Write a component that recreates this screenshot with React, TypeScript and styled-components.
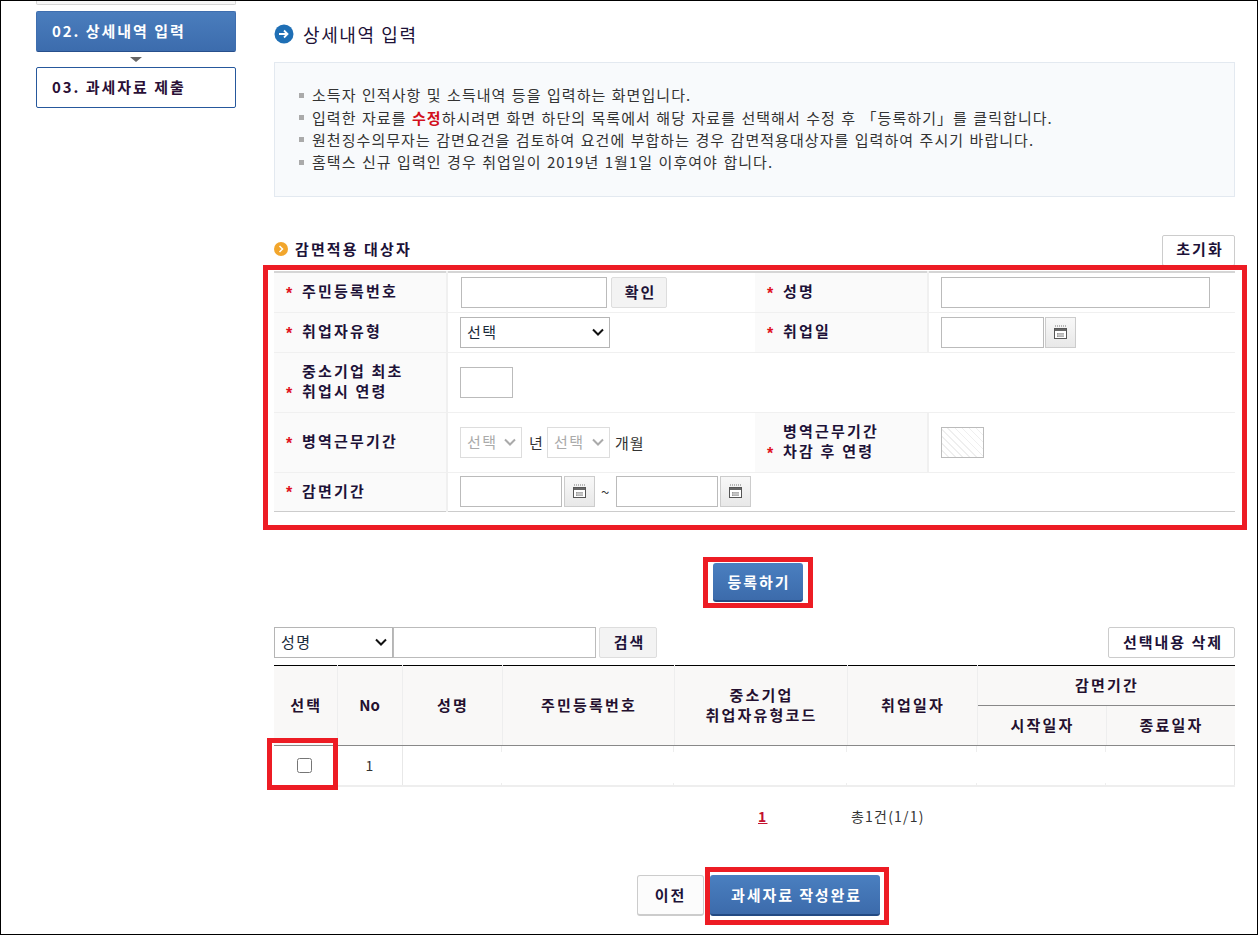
import React from 'react';
import styled, { createGlobalStyle } from 'styled-components';

const GlobalStyle = createGlobalStyle`
    * { box-sizing: border-box; }
    html, body { margin: 0; padding: 0; background: #fff; }
    body { font-family: "Noto Sans CJK KR", "Liberation Sans", sans-serif; font-size: 15px; color: #333; }
`;

const chevron = (color: string) =>
    `url("data:image/svg+xml,%3Csvg xmlns='http://www.w3.org/2000/svg' width='12' height='8'%3E%3Cpath d='M1 1.5 6 6.5 11 1.5' fill='none' stroke='${color}' stroke-width='2'/%3E%3C/svg%3E")`;

const Frame = styled.div`
    width: 1258px;
    height: 935px;
    display: flex;
    overflow: hidden;
    border: 1px solid #000;
`;

const Sidebar = styled.nav`
    width: 200px;
    margin-left: 35px;
    flex: none;
    display: flex;
    flex-direction: column;
    align-items: center;
`;

const PrevStep = styled.div`
    width: 100%;
    height: 4px;
    background: #f7f7f7;
    border: 1px solid #d5d5d5;
    border-top: 0;
    border-radius: 0 0 2px 2px;
    margin-bottom: 6px;
`;

const Step = styled.div<{ $active?: boolean }>`
    width: 100%;
    height: 41px;
    padding: 0 0 3px 15px;
    display: flex;
    align-items: center;
    font-size: 15px;
    font-weight: 700;
    letter-spacing: 1.95px;
    border-radius: 2px;
    color: ${p => (p.$active ? '#fff' : '#2a0f36')};
    background: ${p => (p.$active ? 'linear-gradient(#4a7dbd, #3c6cad)' : '#fff')};
    border: 1px solid ${p => (p.$active ? '#3e6eaf' : '#26589c')};
    border-bottom-color: ${p => (p.$active ? '#274f8c' : '#26589c')};
`;

const StepArrow = styled.div`
    width: 0;
    height: 0;
    margin: 5px 0 5px;
    border-left: 6px solid transparent;
    border-right: 6px solid transparent;
    border-top: 5px solid #666;
`;

const Main = styled.main`
    width: 961px;
    margin-left: 38px;
    flex: none;
`;

const PageTitle = styled.h2`
    margin: 19px 0 0;
    height: 28px;
    display: flex;
    align-items: center;
    gap: 9px;
    font-size: 18px;
    font-weight: 400;
    letter-spacing: 1.6px;
    color: #1d1238;
`;

const InfoBox = styled.ul`
    list-style: none;
    margin: 14px 0 0;
    height: 135px;
    padding: 21px 0 0 24px;
    background: #f8fafc;
    border: 1px solid #e3e9f0;
`;

const InfoItem = styled.li`
    height: 22.4px;
    line-height: 22px;
    font-size: 15px;
    letter-spacing: 1.05px;
    word-spacing: 1px;
    color: #333;
    display: flex;
    align-items: center;
    white-space: pre;
    &::before {
        content: '';
        width: 5px;
        height: 5px;
        margin-right: 8px;
        background: #aaa;
    }
`;

const RedText = styled.b`
    color: #d2101c;
`;

const SectionHead = styled.div`
    margin-top: 38px;
    height: 30px;
    display: flex;
    align-items: center;
    justify-content: space-between;
`;

const SectionTitle = styled.h3`
    margin: 0 0 3px;
    display: flex;
    align-items: center;
    gap: 7px;
    font-size: 15px;
    font-weight: 700;
    letter-spacing: 2.1px;
    color: #1d1238;
`;

const Button = styled.button<{ $w: number }>`
    width: ${p => p.$w}px;
    height: 31px;
    padding: 0 0 1px 3px;
    flex: none;
    font-family: inherit;
    font-size: 15px;
    font-weight: 700;
    letter-spacing: 2px;
    color: #1d1238;
    background: #f3f3f3;
    border: 1px solid #ddd;
    border-radius: 2px;
`;

const ConfirmButton = styled(Button)`
    margin-left: 4px;
`;

const WhiteButton = styled(Button)`
    background: #fff;
    border-color: #ccc;
`;

const ResetButton = styled(WhiteButton)`
    padding-bottom: 3px;
`;

const BlueButton = styled.button<{ $w: number; $h: number }>`
    width: ${p => p.$w}px;
    height: ${p => p.$h}px;
    padding: 0 0 0 3px;
    font-family: inherit;
    font-size: 15px;
    font-weight: 700;
    letter-spacing: 1.9px;
    color: #fff;
    background: linear-gradient(#4a7fc0, #3c6bab);
    border: 0;
    border-bottom: 2px solid #234a83;
    border-radius: 3px;
`;

const FormWrap = styled.div`
    position: relative;
    margin-top: 6px;
`;

const MarkedInline = styled.div`
    position: relative;
    display: inline-flex;
`;

const Mark = styled.div<{ $t: number; $r: number; $b: number; $l: number }>`
    position: absolute;
    top: ${p => p.$t}px;
    right: ${p => p.$r}px;
    bottom: ${p => p.$b}px;
    left: ${p => p.$l}px;
    border: 5px solid #ed1c24;
    pointer-events: none;
`;

const FormTable = styled.table`
    width: 100%;
    table-layout: fixed;
    border-collapse: collapse;
    border-top: 2px solid #d5d5d5;
`;

const FormRow = styled.tr<{ $h: number }>`
    height: ${p => p.$h}px;
    border-bottom: 1px solid #f0f0f0;
    &:last-child {
        border-bottom: 1px solid #ccc;
    }
`;

const Th = styled.th`
    padding: 0 0 2px 12px;
    background: #fafafa;
    border-right: 2px solid #f0f0f0;
    text-align: left;
    font-size: 15px;
    font-weight: 700;
    letter-spacing: 2.2px;
    line-height: 20px;
    color: #1d1238;
`;

const LabelRow = styled.span`
    display: flex;
    align-items: center;
    height: 20px;
`;

const Req = styled.span<{ $on?: boolean }>`
    width: 16px;
    flex: none;
    padding-top: 5px;
    color: #e01020;
    font: 700 16px/14px "Liberation Sans", sans-serif;
    visibility: ${p => (p.$on === false ? 'hidden' : 'visible')};
`;

const Td = styled.td`
    padding: 0 0 0 12px;
`;

const Controls = styled.div`
    display: flex;
    align-items: center;
    font-size: 15px;
    color: #333;
`;

const Input = styled.input<{ $w: number; $ml?: number }>`
    width: ${p => p.$w}px;
    height: 31px;
    margin-left: ${p => p.$ml ?? 0}px;
    padding: 0 6px;
    flex: none;
    background: #fff;
    border: 1px solid #bbb;
    outline: 0;
`;

const HatchBox = styled.div`
    width: 43px;
    height: 31px;
    border: 1px solid #bbb;
    background: repeating-linear-gradient(45deg, #fff, #fff 4px, #efefef 4px, #efefef 5px);
`;

const Select = styled.select<{ $w: number }>`
    width: ${p => p.$w}px;
    height: 31px;
    flex: none;
    padding: 0 0 2px 6px;
    appearance: none;
    font-family: inherit;
    font-size: 15px;
    letter-spacing: 1.4px;
    color: #1a2a3a;
    background: #fff ${chevron('%23111')} no-repeat right 5px center;
    border: 1px solid #b5b5b5;
    border-radius: 0;
    outline: 0;
    &:disabled {
        color: #aaa;
        border-color: #ddd;
        opacity: 1;
        background-image: ${chevron('%23aaa')};
    }
`;

const CalButton = styled.button<{ $ml: number }>`
    width: 31px;
    height: 31px;
    margin-left: ${p => p.$ml}px;
    padding: 0;
    flex: none;
    display: flex;
    align-items: center;
    justify-content: center;
    background: linear-gradient(#f8f8f8, #e8e8e8);
    border: 1px solid #ccc;
`;

const UnitText = styled.span<{ $w: number; $ml: number }>`
    width: ${p => p.$w}px;
    margin-left: ${p => p.$ml}px;
    flex: none;
    letter-spacing: 1px;
`;

const SubmitRow = styled.div`
    margin-top: 51px;
    display: flex;
    justify-content: center;
    padding-left: 6px;
`;

const SearchRow = styled.div`
    margin-top: 25px;
    height: 31px;
    display: flex;
    align-items: center;
`;

const SearchGap = styled.div`
    width: 3px;
`;

const Spacer = styled.div`
    flex: 1;
`;

const ListWrap = styled.div`
    position: relative;
    margin-top: 7px;
`;

const ListTable = styled.table`
    width: 100%;
    table-layout: fixed;
    border-collapse: collapse;
    border-top: 1px solid #000;
    border-bottom: 2px solid #eee;
`;

const ListTh = styled.th<{ $tight?: boolean }>`
    height: 40px;
    padding: 0 0 0 ${p => (p.$tight ? 0 : 2)}px;
    background: #f9f8f7;
    border-right: 1px solid #eee;
    border-bottom: 1px solid #888;
    font-size: 15px;
    font-weight: 700;
    letter-spacing: ${p => (p.$tight ? 0 : 2.2)}px;
    line-height: 20px;
    color: #24102f;
    &:last-child { border-right: 0; }
`;

const ListTd = styled.td<{ $solid?: boolean }>`
    height: 41px;
    padding: 0;
    text-align: center;
    font-size: 14px;
    color: #333;
    border-right: 1px solid ${p => (p.$solid ? '#e8e8e8' : 'transparent')};
    background: ${p => (p.$solid
        ? 'none'
        : 'linear-gradient(#eee, #eee) right top / 1px 6px no-repeat, linear-gradient(#eee, #eee) right bottom / 1px 2px no-repeat')};
    &:last-child { border-right: 1px solid #e8e8e8; background: none; }
`;

const CheckCell = styled(ListTd)`
    padding: 0 1px 3px 0;
`;

const Check = styled.input`
    width: 15px;
    height: 15px;
    margin: 0;
    vertical-align: middle;
`;

const Pager = styled.div`
    margin-top: 17px;
    height: 24px;
    display: flex;
    align-items: center;
    padding-left: 484px;
    font-size: 14px;
    letter-spacing: 1.2px;
`;

const PageLink = styled.a`
    width: 93px;
    color: #c4122f;
    font-weight: 700;
    text-decoration: underline;
`;

const BottomRow = styled.div`
    margin-top: 47px;
    display: flex;
    gap: 6px;
    padding-left: 363px;
`;

const PrevButton = styled(WhiteButton)`
    height: 41px;
    padding-left: 0;
    background: #fcfcfc;
    border: 1px solid #ccc;
    border-bottom-width: 2px;
    border-radius: 3px;
`;

const CalendarIcon = () => (
    <svg width="15" height="15" viewBox="0 0 15 15">
        <path d="M2 1h1M4 1h1M6 1h1M8 1h1M10 1h1M12 1h1" stroke="#777" strokeWidth="1" />
        <rect x="1.5" y="3.5" width="12" height="10" fill="#fff" stroke="#555" />
        <rect x="2" y="4" width="11" height="2" fill="#666" />
        <path d="M4 8h7v4H4z" fill="#999" />
        <path d="M6 8v4M8 8v4M10 8v4M4 10h7" stroke="#eee" strokeWidth="0.6" />
    </svg>
);

const BlueDot = () => (
    <svg width="20" height="20" viewBox="0 0 20 20">
        <circle cx="10" cy="10" r="9.5" fill="#1f6fb5" />
        <path d="M5 10h8M10 6.5 13.5 10 10 13.5" fill="none" stroke="#fff" strokeWidth="1.8" />
    </svg>
);

const OrangeDot = () => (
    <svg width="14" height="14" viewBox="0 0 14 14">
        <circle cx="7" cy="7" r="7" fill="#f2a62c" />
        <path d="M5.5 4 8.5 7 5.5 10" fill="none" stroke="#fff" strokeWidth="1.5" />
    </svg>
);

const Label = ({ lines }: { lines: string[] }) => (
    <>
        {lines.map((line, i) => (
            <LabelRow key={line}>
                <Req $on={i === lines.length - 1}>*</Req>
                {line}
            </LabelRow>
        ))}
    </>
);

const App = () => {
    return (
        <Frame>
            <GlobalStyle />
            <Sidebar>
                <PrevStep />
                <Step $active>02. 상세내역 입력</Step>
                <StepArrow />
                <Step>03. 과세자료 제출</Step>
            </Sidebar>
            <Main>
                <PageTitle><BlueDot />상세내역 입력</PageTitle>
                <InfoBox>
                    <InfoItem>소득자 인적사항 및 소득내역 등을 입력하는 화면입니다.</InfoItem>
                    <InfoItem>입력한 자료를 <RedText>수정</RedText>하시려면 화면 하단의 목록에서 해당 자료를 선택해서 수정 후 「등록하기」를 클릭합니다.</InfoItem>
                    <InfoItem>원천징수의무자는 감면요건을 검토하여 요건에 부합하는 경우 감면적용대상자를 입력하여 주시기 바랍니다.</InfoItem>
                    <InfoItem>홈택스 신규 입력인 경우 취업일이 2019년 1월1일 이후여야 합니다.</InfoItem>
                </InfoBox>
                <SectionHead>
                    <SectionTitle><OrangeDot />감면적용 대상자</SectionTitle>
                    <ResetButton $w={73}>초기화</ResetButton>
                </SectionHead>
                <FormWrap>
                    <Mark $t={-6} $r={-12} $b={-18} $l={-11} />
                    <FormTable>
                        <colgroup>
                            <col width="173" />
                            <col width="308" />
                            <col width="173" />
                            <col />
                        </colgroup>
                        <tbody>
                            <FormRow $h={40}>
                                <Th><Label lines={['주민등록번호']} /></Th>
                                <Td>
                                    <Controls>
                                        <Input $w={146} $ml={1} />
                                        <ConfirmButton $w={56}>확인</ConfirmButton>
                                    </Controls>
                                </Td>
                                <Th><Label lines={['성명']} /></Th>
                                <Td><Input $w={269} /></Td>
                            </FormRow>
                            <FormRow $h={40}>
                                <Th><Label lines={['취업자유형']} /></Th>
                                <Td><Controls><Select $w={150}><option>선택</option></Select></Controls></Td>
                                <Th><Label lines={['취업일']} /></Th>
                                <Td>
                                    <Controls>
                                        <Input $w={103} />
                                        <CalButton $ml={1}><CalendarIcon /></CalButton>
                                    </Controls>
                                </Td>
                            </FormRow>
                            <FormRow $h={60}>
                                <Th><Label lines={['중소기업 최초', '취업시 연령']} /></Th>
                                <Td colSpan={3}><Input $w={53} /></Td>
                            </FormRow>
                            <FormRow $h={60}>
                                <Th><Label lines={['병역근무기간']} /></Th>
                                <Td>
                                    <Controls>
                                        <Select $w={62} disabled><option>선택</option></Select>
                                        <UnitText $w={18} $ml={7}>년</UnitText>
                                        <Select $w={63} disabled><option>선택</option></Select>
                                        <UnitText $w={40} $ml={5}>개월</UnitText>
                                    </Controls>
                                </Td>
                                <Th><Label lines={['병역근무기간', '차감 후 연령']} /></Th>
                                <Td><HatchBox /></Td>
                            </FormRow>
                            <FormRow $h={39}>
                                <Th><Label lines={['감면기간']} /></Th>
                                <Td colSpan={3}>
                                    <Controls>
                                        <Input $w={102} />
                                        <CalButton $ml={2}><CalendarIcon /></CalButton>
                                        <UnitText $w={15} $ml={6}>~</UnitText>
                                        <Input $w={102} />
                                        <CalButton $ml={2}><CalendarIcon /></CalButton>
                                    </Controls>
                                </Td>
                            </FormRow>
                        </tbody>
                    </FormTable>
                </FormWrap>
                <SubmitRow>
                    <MarkedInline>
                        <BlueButton $w={90} $h={39}>등록하기</BlueButton>
                        <Mark $t={-6} $r={-10} $b={-6} $l={-10} />
                    </MarkedInline>
                </SubmitRow>
                <SearchRow>
                    <Select $w={119}><option>성명</option></Select>
                    <Input $w={203} />
                    <SearchGap />
                    <Button $w={58}>검색</Button>
                    <Spacer />
                    <WhiteButton $w={127}>선택내용 삭제</WhiteButton>
                </SearchRow>
                <ListWrap>
                    <Mark $t={73} $r={897} $b={-3} $l={-7} />
                    <ListTable>
                        <colgroup>
                            <col width="63" />
                            <col width="65" />
                            <col width="100" />
                            <col width="172" />
                            <col width="173" />
                            <col width="130" />
                            <col width="129" />
                            <col />
                        </colgroup>
                        <thead>
                            <tr>
                                <ListTh rowSpan={2}>선택</ListTh>
                                <ListTh rowSpan={2} $tight>No</ListTh>
                                <ListTh rowSpan={2}>성명</ListTh>
                                <ListTh rowSpan={2}>주민등록번호</ListTh>
                                <ListTh rowSpan={2}>중소기업<br />취업자유형코드</ListTh>
                                <ListTh rowSpan={2}>취업일자</ListTh>
                                <ListTh colSpan={2}>감면기간</ListTh>
                            </tr>
                            <tr>
                                <ListTh>시작일자</ListTh>
                                <ListTh>종료일자</ListTh>
                            </tr>
                        </thead>
                        <tbody>
                            <tr>
                                <CheckCell $solid><Check type="checkbox" /></CheckCell>
                                <ListTd $solid>1</ListTd>
                                <ListTd />
                                <ListTd />
                                <ListTd />
                                <ListTd />
                                <ListTd />
                                <ListTd />
                            </tr>
                        </tbody>
                    </ListTable>
                </ListWrap>
                <Pager>
                    <PageLink>1</PageLink>
                    <span>총1건(1/1)</span>
                </Pager>
                <BottomRow>
                    <PrevButton $w={67}>이전</PrevButton>
                    <MarkedInline>
                        <BlueButton $w={170} $h={41}>과세자료 작성완료</BlueButton>
                        <Mark $t={-8} $r={-9} $b={-9} $l={-5} />
                    </MarkedInline>
                </BottomRow>
            </Main>
        </Frame>
    );
};

export default App;
